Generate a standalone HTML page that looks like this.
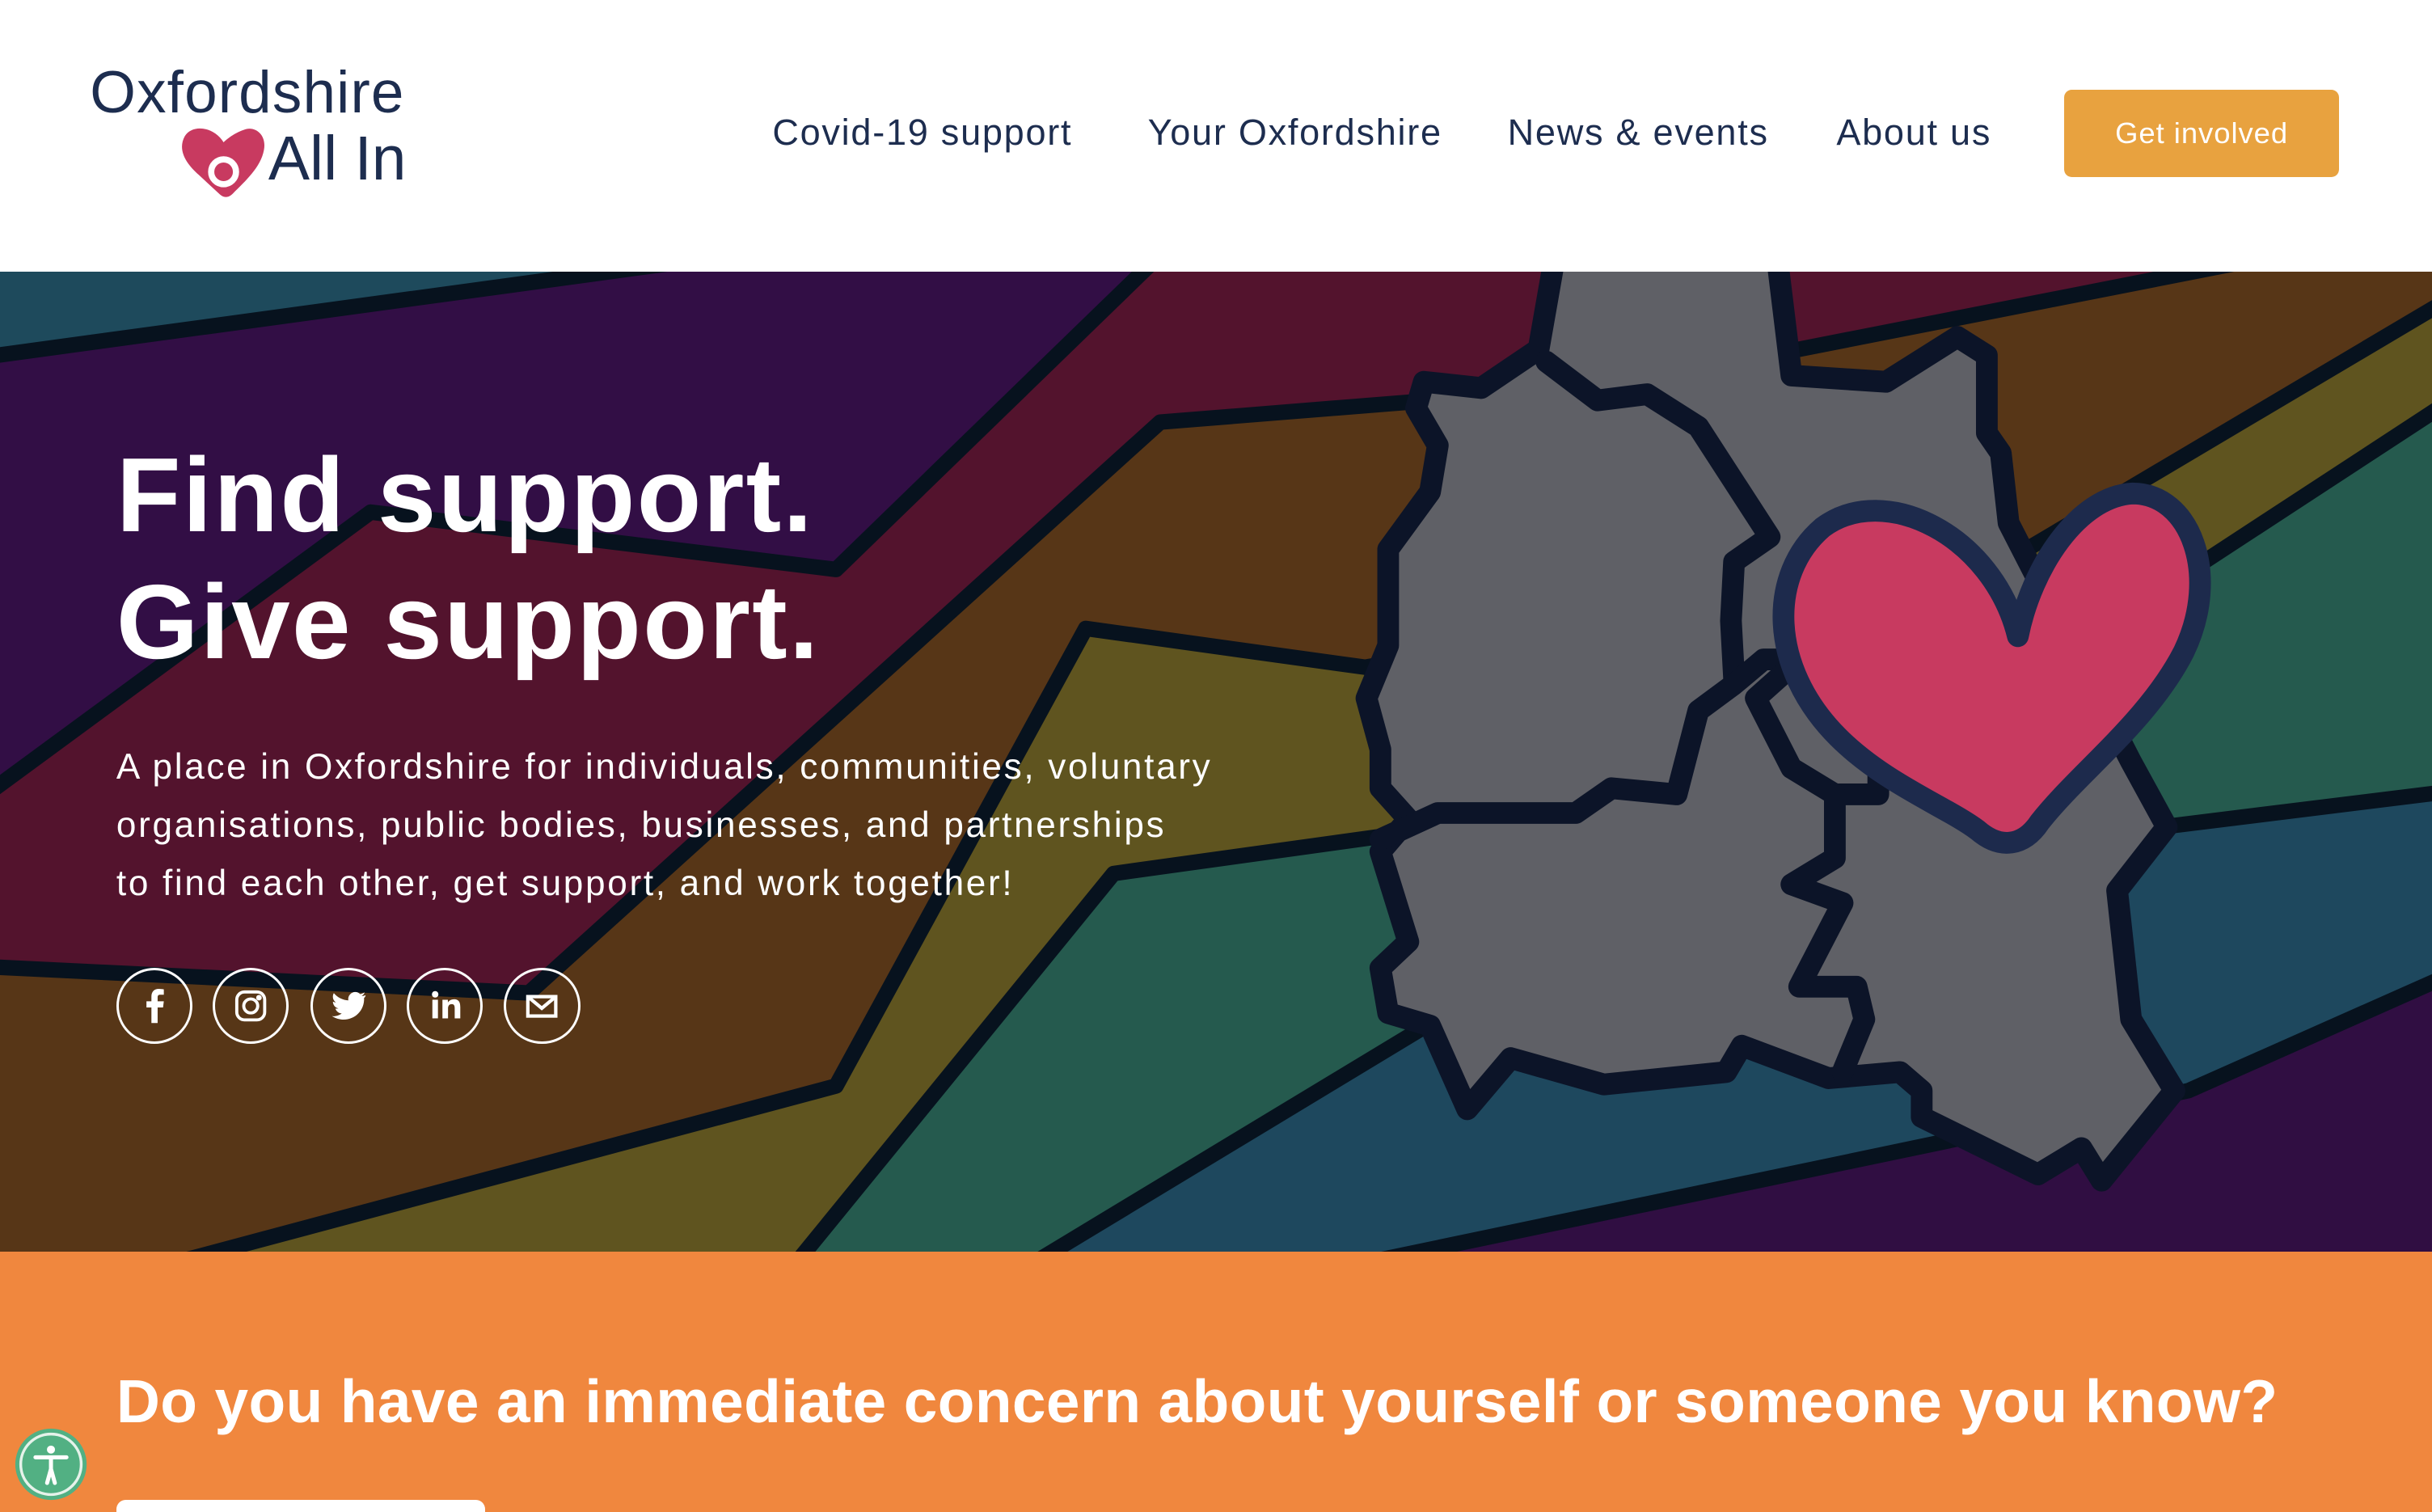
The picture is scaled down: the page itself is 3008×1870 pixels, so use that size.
<!DOCTYPE html>
<html><head><meta charset="utf-8"><style>
html,body{margin:0;padding:0;background:#fff;overflow:hidden}
#w{width:1568px;height:975px;position:relative;zoom:1.918367;overflow:hidden;font-family:"Liberation Sans",sans-serif}
.nav{position:absolute;top:72px;font-size:23.5px;color:#1d2d4f;white-space:nowrap;letter-spacing:0.9px}
.btn{position:absolute;left:1331px;top:58px;width:177px;height:56px;background:#e8a23f;border-radius:5px;color:#fff;font-size:19px;text-align:center;line-height:56px;letter-spacing:0.5px}
svg{position:absolute}
.h1{position:absolute;left:75px;color:#fff;font-weight:bold;font-size:68px;white-space:nowrap;letter-spacing:1.2px}
.p{position:absolute;left:75px;top:476px;color:#fff;font-size:23px;line-height:37.5px;white-space:nowrap;letter-spacing:1.4px}
.ic{position:absolute;top:624px;width:46px;height:46px;border:2px solid #fff;border-radius:50%}
</style></head><body><div id="w">
<div style="position:absolute;left:58px;top:38px;font-size:38px;color:#1d2d4f;letter-spacing:0.6px">Oxfordshire</div>
<div style="position:absolute;left:173px;top:80px;font-size:40px;color:#1d2d4f">All In</div>
<svg style="left:114px;top:80px" width="60" height="50" viewBox="0 0 60 50"><path d="M30,12 C24,2 10,0 5,8 C0,17 6,26 14,33 L27,45 C30,48 33,48 36,45 C44,37 54,28 56,17 C58,7 50,1 43,4 C37,6 32,10 30,12Z" fill="#c83a60"/><circle cx="30" cy="31" r="8" fill="#c83a60" stroke="#fff" stroke-width="4"/></svg>
<div class="nav" style="left:498px">Covid-19 support</div>
<div class="nav" style="left:740px">Your Oxfordshire</div>
<div class="nav" style="left:972px">News &amp; events</div>
<div class="nav" style="left:1184px">About us</div>
<div class="btn">Get involved</div>

<svg style="left:0;top:175px" width="1568" height="632" viewBox="0 175 1568 632">
<rect x="0" y="175" width="1568" height="632" fill="#300e42"/>
<polygon points="-10,820 890,807 1253,736 1411,703 1580,628 1580,160 -10,160" fill="#1e485e"/>
<polygon points="-10,820 670,807 938,650 1402,532 1580,510 1580,160 -10,160" fill="#255a4e"/>
<polygon points="-10,820 515,807 718,563 898,538 1421,362 1580,258 1580,160 -10,160" fill="#5f541f"/>
<polygon points="-10,820 120,807 539,700 700,405 880,430 1300,358 1580,192 1580,160 -10,160" fill="#573617"/>
<polygon points="-10,623 341,640 748,272 910,259 1160,225 1440,170 -10,160" fill="#53132d"/>
<polygon points="-10,513 239,330 539,367 742,170 -10,160" fill="#320e45"/>
<polygon points="-10,230 430,170 -10,170" fill="#1e4a5c"/>
<g fill="none" stroke="#07121e" stroke-width="10" stroke-linejoin="round">
<polyline points="890,812 1253,736 1411,703 1580,628"/>
<polyline points="670,812 938,650 1402,532 1580,510"/>
<polyline points="515,812 718,563 898,538 1421,362 1580,258"/>
<polyline points="120,812 539,700 700,405 880,430 1300,358 1580,192"/>
<polyline points="-10,623 341,640 748,272 910,259 1160,225 1440,170"/>
<polyline points="-10,513 239,330 539,367 742,170"/>
<polyline points="-10,230 430,170"/>
</g>
<g stroke="#0c1428" stroke-width="14" stroke-linejoin="round" stroke-linecap="round">
<polygon fill="#5f6066" points="1002,168 992,225 955,250 918,246 913,263 927,287 922,317 895,354 895,416 881,450 890,483 890,508 908,528 890,549 908,607 890,624 895,653 922,661 946,715 974,682 1034,699 1113,691 1123,674 1179,695 1225,691 1239,703 1239,720 1314,757 1342,740 1355,761 1402,703 1374,657 1365,574 1397,533 1374,491 1295,337 1290,292 1281,279 1281,229 1262,217 1216,246 1155,242 1146,168"/>
<polyline fill="none" points="997,233 1030,258 1062,254 1095,275 1141,346 1118,362 1116,400 1118,437"/>
<polyline fill="none" points="890,541 927,524 1016,524 1039,508 1081,512 1095,458 1118,441 1137,425 1160,425"/>
<polyline fill="none" points="1160,425 1132,450 1155,495 1183,512 1211,512 1211,483"/>
<polyline fill="none" points="1183,512 1183,553 1155,570 1188,582 1160,636 1197,636 1202,657 1188,691"/>
</g>
<path d="M1301,410 C1285,345 1215,310 1175,340 C1140,370 1140,430 1185,475 C1215,505 1255,520 1275,535 C1290,548 1305,545 1315,530 C1340,498 1385,465 1408,420 C1432,370 1412,318 1375,318 C1340,320 1310,365 1301,410Z" fill="#c83a60" stroke="#1d2a4c" stroke-width="14" stroke-linejoin="round"/>
</svg>

<div class="h1" style="top:280px">Find support.</div>
<div class="h1" style="top:362px">Give support.</div>
<div class="p">A place in Oxfordshire for individuals, communities, voluntary<br>organisations, public bodies, businesses, and partnerships<br>to find each other, get support, and work together!</div>

<div class="ic" style="left:75px"><svg width="46" height="46" viewBox="0 0 46 46"><path d="M25,34 V24 H28.5 L29,20 H25 V17.5 C25,16.3 25.5,15.8 26.8,15.8 H29 V12.3 C28.2,12.2 27,12 25.8,12 C22.8,12 21,13.8 21,17 V20 H17.8 V24 H21 V34Z" fill="#fff"/></svg></div>
<div class="ic" style="left:137px"><svg width="46" height="46" viewBox="0 0 46 46" fill="none" stroke="#fff" stroke-width="2"><rect x="14" y="14" width="18" height="18" rx="5"/><circle cx="23" cy="23" r="4.5"/><circle cx="28.3" cy="17.7" r="0.8" fill="#fff"/></svg></div>
<div class="ic" style="left:200px"><svg width="46" height="46" viewBox="0 0 46 46"><path d="M34,16 C33.2,16.4 32.3,16.6 31.4,16.7 C32.3,16.2 33,15.3 33.4,14.3 C32.5,14.8 31.5,15.2 30.5,15.4 C28.7,13.5 25.7,13.6 24,15.5 C23,16.6 22.6,18 22.9,19.4 C19.2,19.2 15.8,17.5 13.5,14.7 C12.3,16.8 12.9,19.4 14.9,20.7 C14.2,20.7 13.5,20.5 12.9,20.2 C12.9,22.3 14.4,24.2 16.5,24.6 C15.8,24.8 15.1,24.8 14.5,24.7 C15.1,26.5 16.7,27.8 18.6,27.8 C16.8,29.2 14.5,29.8 12.3,29.6 C21.7,35.5 33.5,29 33,17.8 C33.6,17.3 34,16.7 34,16Z" fill="#fff"/></svg></div>
<div class="ic" style="left:262px"><svg width="46" height="46" viewBox="0 0 46 46" fill="#fff"><rect x="15" y="19" width="3.6" height="12"/><circle cx="16.8" cy="15.5" r="2.1"/><path d="M21.5,19 H25 V20.8 C25.6,19.7 27,18.7 28.9,18.7 C32.2,18.7 33,20.8 33,23.7 V31 H29.4 V24.5 C29.4,23 29.1,21.8 27.5,21.8 C25.8,21.8 25.1,23 25.1,24.6 V31 H21.5Z"/></svg></div>
<div class="ic" style="left:325px"><svg width="46" height="46" viewBox="0 0 46 46" fill="none" stroke="#fff" stroke-width="2.2"><rect x="14" y="17" width="18" height="12.5"/><path d="M14,17 L23,24.5 L32,17"/></svg></div>

<div style="position:absolute;left:0;top:807px;width:1568px;height:168px;background:#f0873e"></div>
<div style="position:absolute;left:75px;top:881px;color:#fff;font-weight:bold;font-size:39px;white-space:nowrap;letter-spacing:0.2px">Do you have an immediate concern about yourself or someone you know?</div>
<div style="position:absolute;left:75px;top:967px;width:238px;height:30px;background:#fff;border-radius:6px"></div>
<svg style="left:9px;top:920px" width="48" height="48" viewBox="0 0 48 48"><circle cx="24" cy="24" r="23" fill="#52b083"/><circle cx="24" cy="24" r="19.5" fill="none" stroke="#e6f2ea" stroke-width="1.8"/><circle cx="24" cy="14.5" r="2.6" fill="#fff"/><path d="M14,19.5 H34 M24,19.5 V27 M24,27 L21.5,36 M24,27 L26.5,36" stroke="#fff" stroke-width="2.6" stroke-linecap="round" fill="none"/></svg>
</div></body></html>
